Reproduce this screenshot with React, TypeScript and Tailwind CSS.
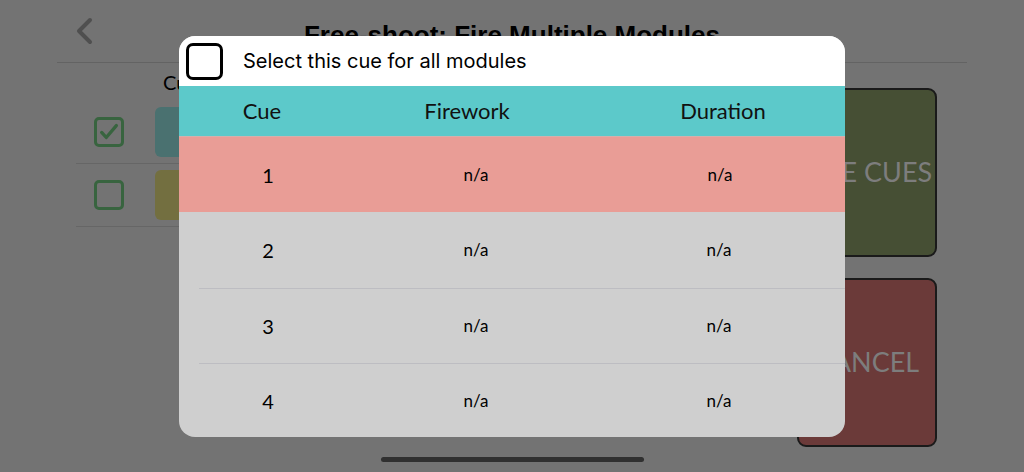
const rows = [
  { cue: 1, firework: "n/a", duration: "n/a", active: true },
  { cue: 2, firework: "n/a", duration: "n/a", active: false },
  { cue: 3, firework: "n/a", duration: "n/a", active: false },
  { cue: 4, firework: "n/a", duration: "n/a", active: false },
];

const rowHeights = ["h-[76px]", "h-[76px]", "h-[75px]", "h-[74px]"];

export default function App() {
  return (
    <div
      className="relative h-[472px] w-[1024px] overflow-hidden bg-[#737373]"
      style={{ fontFamily: "Lato, 'Liberation Sans', sans-serif" }}
    >
      {/* Dimmed page behind the sheet */}
      <div className="mx-[57px] flex h-[63px] items-center border-b border-[#636363]">
        <svg viewBox="0 0 20 28" className="ml-[17px] h-[28px] w-[20px]">
          <path d="M16 3 5 14l11 11" fill="none" stroke="#4f4f4f" strokeWidth="4" strokeLinecap="round" strokeLinejoin="round" />
        </svg>
        <h1
          className="flex-1 pr-[37px] pt-[8px] text-center text-[26px] font-bold text-black"
          style={{ fontFamily: "'Liberation Sans', Arial, sans-serif" }}
        >
          Free-shoot: Fire Multiple Modules
        </h1>
      </div>

      <div className="flex">
        <div className="ml-[76px] w-[520px]">
          <div className="flex h-[38px] items-center pl-[87px] text-[20px] text-black">Cue</div>
          <div className="flex h-[63px] items-center border-b border-[#666] pl-[18px]">
            <div className="flex h-[30px] w-[30px] items-center justify-center rounded-[5px] border-[3px] border-[#38643f]">
              <svg viewBox="0 0 24 24" className="h-[22px] w-[22px]">
                <path d="M4 12.5l5 5.5L20 5" fill="none" stroke="#38643f" strokeWidth="3.6" strokeLinecap="round" strokeLinejoin="round" />
              </svg>
            </div>
            <div className="ml-[31px] h-[50px] w-[120px] rounded-[6px] bg-[#4a7170]" />
          </div>
          <div className="flex h-[63px] items-center border-b border-[#666] pl-[18px]">
            <div className="h-[30px] w-[30px] rounded-[5px] border-[3px] border-[#38643f]" />
            <div className="ml-[31px] h-[50px] w-[120px] rounded-[6px] bg-[#736f40]" />
          </div>
        </div>

        <div className="ml-auto mr-[87px] mt-[25px] flex w-[140px] flex-col gap-[21px]">
          <div className="flex h-[169px] items-center justify-center whitespace-nowrap rounded-[9px] border-2 border-[#1a1a1a] bg-[#464f34] text-[27px] text-[#7d7d7d]">
            FIRE CUES
          </div>
          <div className="flex h-[169px] items-center justify-center rounded-[9px] border-2 border-[#1a1a1a] bg-[#6b3a39] text-[27px] text-[#7d7d7d]">
            CANCEL
          </div>
        </div>
      </div>

      {/* Cue picker sheet */}
      <div className="absolute left-[179px] top-[36px] w-[666px] overflow-hidden rounded-[16px] bg-[#cfcfcf]">
        <div className="flex h-[50px] items-center bg-white">
          <div className="ml-[7px] h-[37px] w-[37px] rounded-[7px] border-[3px] border-black" />
          <span
            className="ml-[20px] text-[20px] text-black"
            style={{ fontFamily: "Inter, 'Liberation Sans', sans-serif" }}
          >
            Select this cue for all modules
          </span>
        </div>

        <div className="flex h-[50px] items-center bg-[#5cc9ca] pb-[2px] text-[22px] text-[#111]">
          <div className="w-[166px] text-center">Cue</div>
          <div className="w-[244px] text-center">Firework</div>
          <div className="flex-1 pl-[12px] text-center">Duration</div>
        </div>

        {rows.map((r, i) =>
          r.active ? (
            <div
              key={r.cue}
              className={`flex items-center border-t border-[#d4b0ac] bg-[#e99d96] text-black ${rowHeights[i]}`}
            >
              <div className="w-[178px] text-center text-[20px]">{r.cue}</div>
              <div className="w-[238px] text-center text-[17px]">{r.firework}</div>
              <div className="flex-1 text-center text-[17px]">{r.duration}</div>
            </div>
          ) : (
            <div key={r.cue} className="pl-[20px]">
              <div
                className={`flex items-center text-black ${rowHeights[i]} ${
                  i > 1 ? "border-t border-[#bdbdc2]" : ""
                }`}
              >
                <div className="w-[138px] text-center text-[20px]">{r.cue}</div>
                <div className="w-[278px] text-center text-[17px]">{r.firework}</div>
                <div className="flex-1 pr-[22px] text-center text-[17px]">{r.duration}</div>
              </div>
            </div>
          )
        )}
      </div>

      {/* Home indicator */}
      <div className="absolute bottom-[10px] left-[381px] h-[5px] w-[263px] rounded-full bg-[#303030]" />
    </div>
  );
}
